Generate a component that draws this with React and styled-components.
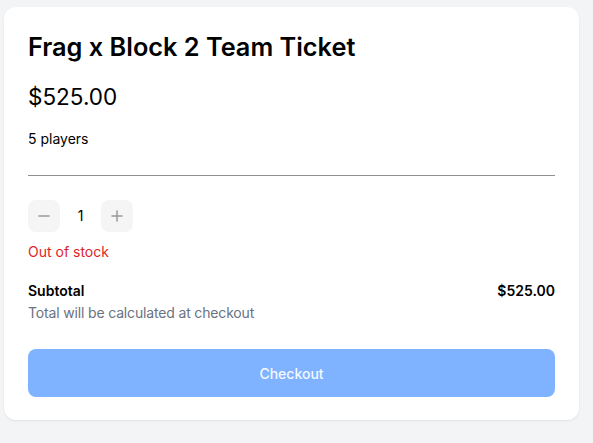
import React from "react";
import styled, { createGlobalStyle } from "styled-components";

const Global = createGlobalStyle`
  html, body { margin: 0; padding: 0; background: #f3f4f6; }
  body { font-family: Inter, "Noto Sans", sans-serif; color: #000; }
  * { box-sizing: border-box; }
`;

const Page = styled.div`
  padding: 7px 14px 23px 4px;
`;

const Card = styled.div`
  background: #fff;
  border-radius: 12px;
  box-shadow: 0 1px 2px rgba(0, 0, 0, 0.08);
  padding: 24px 24px 23px 24px;
  display: flex;
  flex-direction: column;
`;

const Title = styled.h1`
  margin: 0;
  font-size: 25.3px;
  line-height: 32px;
  font-weight: 600;
`;

const Price = styled.div`
  margin-top: 16px;
  font-size: 22.5px;
  line-height: 36px;
  font-weight: 400;
`;

const Meta = styled.div`
  margin-top: 14px;
  font-size: 14px;
  line-height: 20px;
`;

const Divider = styled.hr`
  margin: 26px 0 0 0;
  border: 0;
  height: 1px;
  background: #8f8f8f;
`;

const QtyRow = styled.div`
  margin-top: 24px;
  display: flex;
  align-items: center;
`;

const QtyButton = styled.button`
  width: 32px;
  height: 32px;
  border: 0;
  border-radius: 8px;
  background: #f5f5f5;
  display: flex;
  align-items: center;
  justify-content: center;
  padding: 0;
  color: #9a9a9a;
`;

const QtyValue = styled.span`
  width: 41px;
  text-align: center;
  font-size: 14px;
  line-height: 20px;
`;

const Stock = styled.div`
  margin-top: 10px;
  color: #dc2626;
  font-size: 14px;
  line-height: 20px;
`;

const SubRow = styled.div`
  margin-top: 19px;
  display: flex;
  justify-content: space-between;
  font-size: 14px;
  line-height: 20px;
  font-weight: 600;
`;

const Note = styled.div`
  margin-top: 2px;
  font-size: 14px;
  line-height: 20px;
  letter-spacing: -0.16px;
  color: #6b7280;
`;

const Checkout = styled.button`
  margin-top: 26px;
  height: 48px;
  border: 0;
  border-radius: 8px;
  background: #7fb3ff;
  color: #f5f8ff;
  font-family: Inter, sans-serif;
  font-size: 14px;
  font-weight: 500;
`;

const Minus = () => (
  <svg width="12" height="12" viewBox="0 0 12 12" fill="none">
    <path d="M1 6h10" stroke="currentColor" strokeWidth="1.5" strokeLinecap="round" />
  </svg>
);

const Plus = () => (
  <svg width="12" height="12" viewBox="0 0 12 12" fill="none">
    <path d="M1 6h10M6 1v10" stroke="currentColor" strokeWidth="1.5" strokeLinecap="round" />
  </svg>
);

export default function App() {
  return (
    <Page>
      <Global />
      <Card>
        <Title>Frag x Block 2 Team Ticket</Title>
        <Price>$525.00</Price>
        <Meta>5 players</Meta>
        <Divider />
        <QtyRow>
          <QtyButton aria-label="Decrease"><Minus /></QtyButton>
          <QtyValue>1</QtyValue>
          <QtyButton aria-label="Increase"><Plus /></QtyButton>
        </QtyRow>
        <Stock>Out of stock</Stock>
        <SubRow>
          <span>Subtotal</span>
          <span>$525.00</span>
        </SubRow>
        <Note>Total will be calculated at checkout</Note>
        <Checkout>Checkout</Checkout>
      </Card>
    </Page>
  );
}
